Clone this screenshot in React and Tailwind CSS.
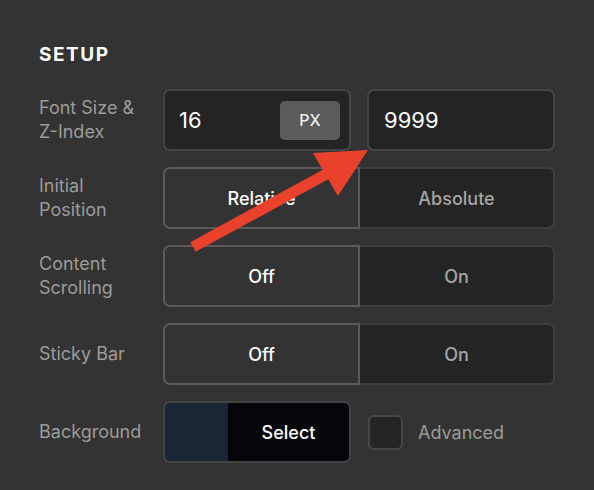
import React from 'react';

function Label({ children }) {
  return (
    <div className="flex items-center text-[18px] leading-6 text-[#9b9b9b]">
      <span>{children}</span>
    </div>
  );
}

function Segmented({ options, active }) {
  return (
    <div className="flex h-[62px]">
      {options.map((opt, i) => {
        const isActive = i === active;
        const first = i === 0;
        return (
          <div
            key={opt}
            className={
              'flex-1 flex items-center justify-center text-[18px] font-medium ' +
              (first ? 'rounded-l-[7px] ' : 'rounded-r-[7px] ') +
              (isActive
                ? 'border-2 border-[#5a5a5a] bg-[#333333] text-white'
                : 'border-2 border-l-0 border-[#3d3d3d] bg-[#242424] text-[#a5a5a5]')
            }
          >
            {opt}
          </div>
        );
      })}
    </div>
  );
}

export default function App() {
  return (
    <div className="relative w-[594px] h-[490px] overflow-hidden bg-[#333333] px-[39px] pt-[43px] font-[Inter,'Noto_Sans',sans-serif]">
      {/* Title */}
      <h2 className="text-[19px] leading-6 font-bold tracking-[0.08em] text-white">SETUP</h2>

      <div className="mt-[22px] grid grid-cols-[124px_392px] gap-y-4">
        {/* Font size & z-index */}
        <Label>
          Font Size &amp;
          <br />
          Z-Index
        </Label>
        <div className="flex h-[62px] gap-4">
          <div className="flex w-[188px] items-center justify-between rounded-[7px] border-2 border-[#444444] bg-[#242424] pl-[14px] pr-[9px]">
            <span className="text-[22px] text-white">16</span>
            <span className="flex h-[39px] w-[60px] items-center justify-center rounded-[5px] bg-[#5b5b5b] text-[16px] font-medium text-[#eeeeee]">
              PX
            </span>
          </div>
          <div className="flex w-[188px] items-center rounded-[7px] border-2 border-[#444444] bg-[#242424] pl-[15px]">
            <span className="text-[22px] text-white">9999</span>
          </div>
        </div>

        {/* Initial position */}
        <Label>
          Initial
          <br />
          Position
        </Label>
        <Segmented options={['Relative', 'Absolute']} active={0} />

        {/* Content scrolling */}
        <Label>
          Content
          <br />
          Scrolling
        </Label>
        <Segmented options={['Off', 'On']} active={0} />

        {/* Sticky bar */}
        <Label>Sticky Bar</Label>
        <Segmented options={['Off', 'On']} active={0} />

        {/* Background */}
        <Label>Background</Label>
        <div className="flex h-[62px] items-center">
          <div className="flex h-[62px] w-[188px] overflow-hidden rounded-[7px] border-2 border-[#444444]">
            <div className="w-[63px] bg-[#1b2535]"></div>
            <div className="flex flex-1 items-center justify-center bg-[#050609] text-[18px] font-medium text-white">
              Select
            </div>
          </div>
          <div className="ml-[17px] h-[35px] w-[35px] rounded-[6px] border-2 border-[#474747] bg-[#252525]"></div>
          <span className="ml-[15px] text-[18px] text-[#9b9b9b]">Advanced</span>
        </div>
      </div>

      {/* Annotation arrow */}
      <svg
        className="pointer-events-none absolute inset-0"
        width="594"
        height="490"
        viewBox="0 0 594 490"
      >
        <line x1="193" y1="247" x2="330" y2="172" stroke="#e9412b" strokeWidth="11" />
        <polygon points="368,150 313,153 338,196" fill="#e9412b" />
      </svg>
    </div>
  );
}
